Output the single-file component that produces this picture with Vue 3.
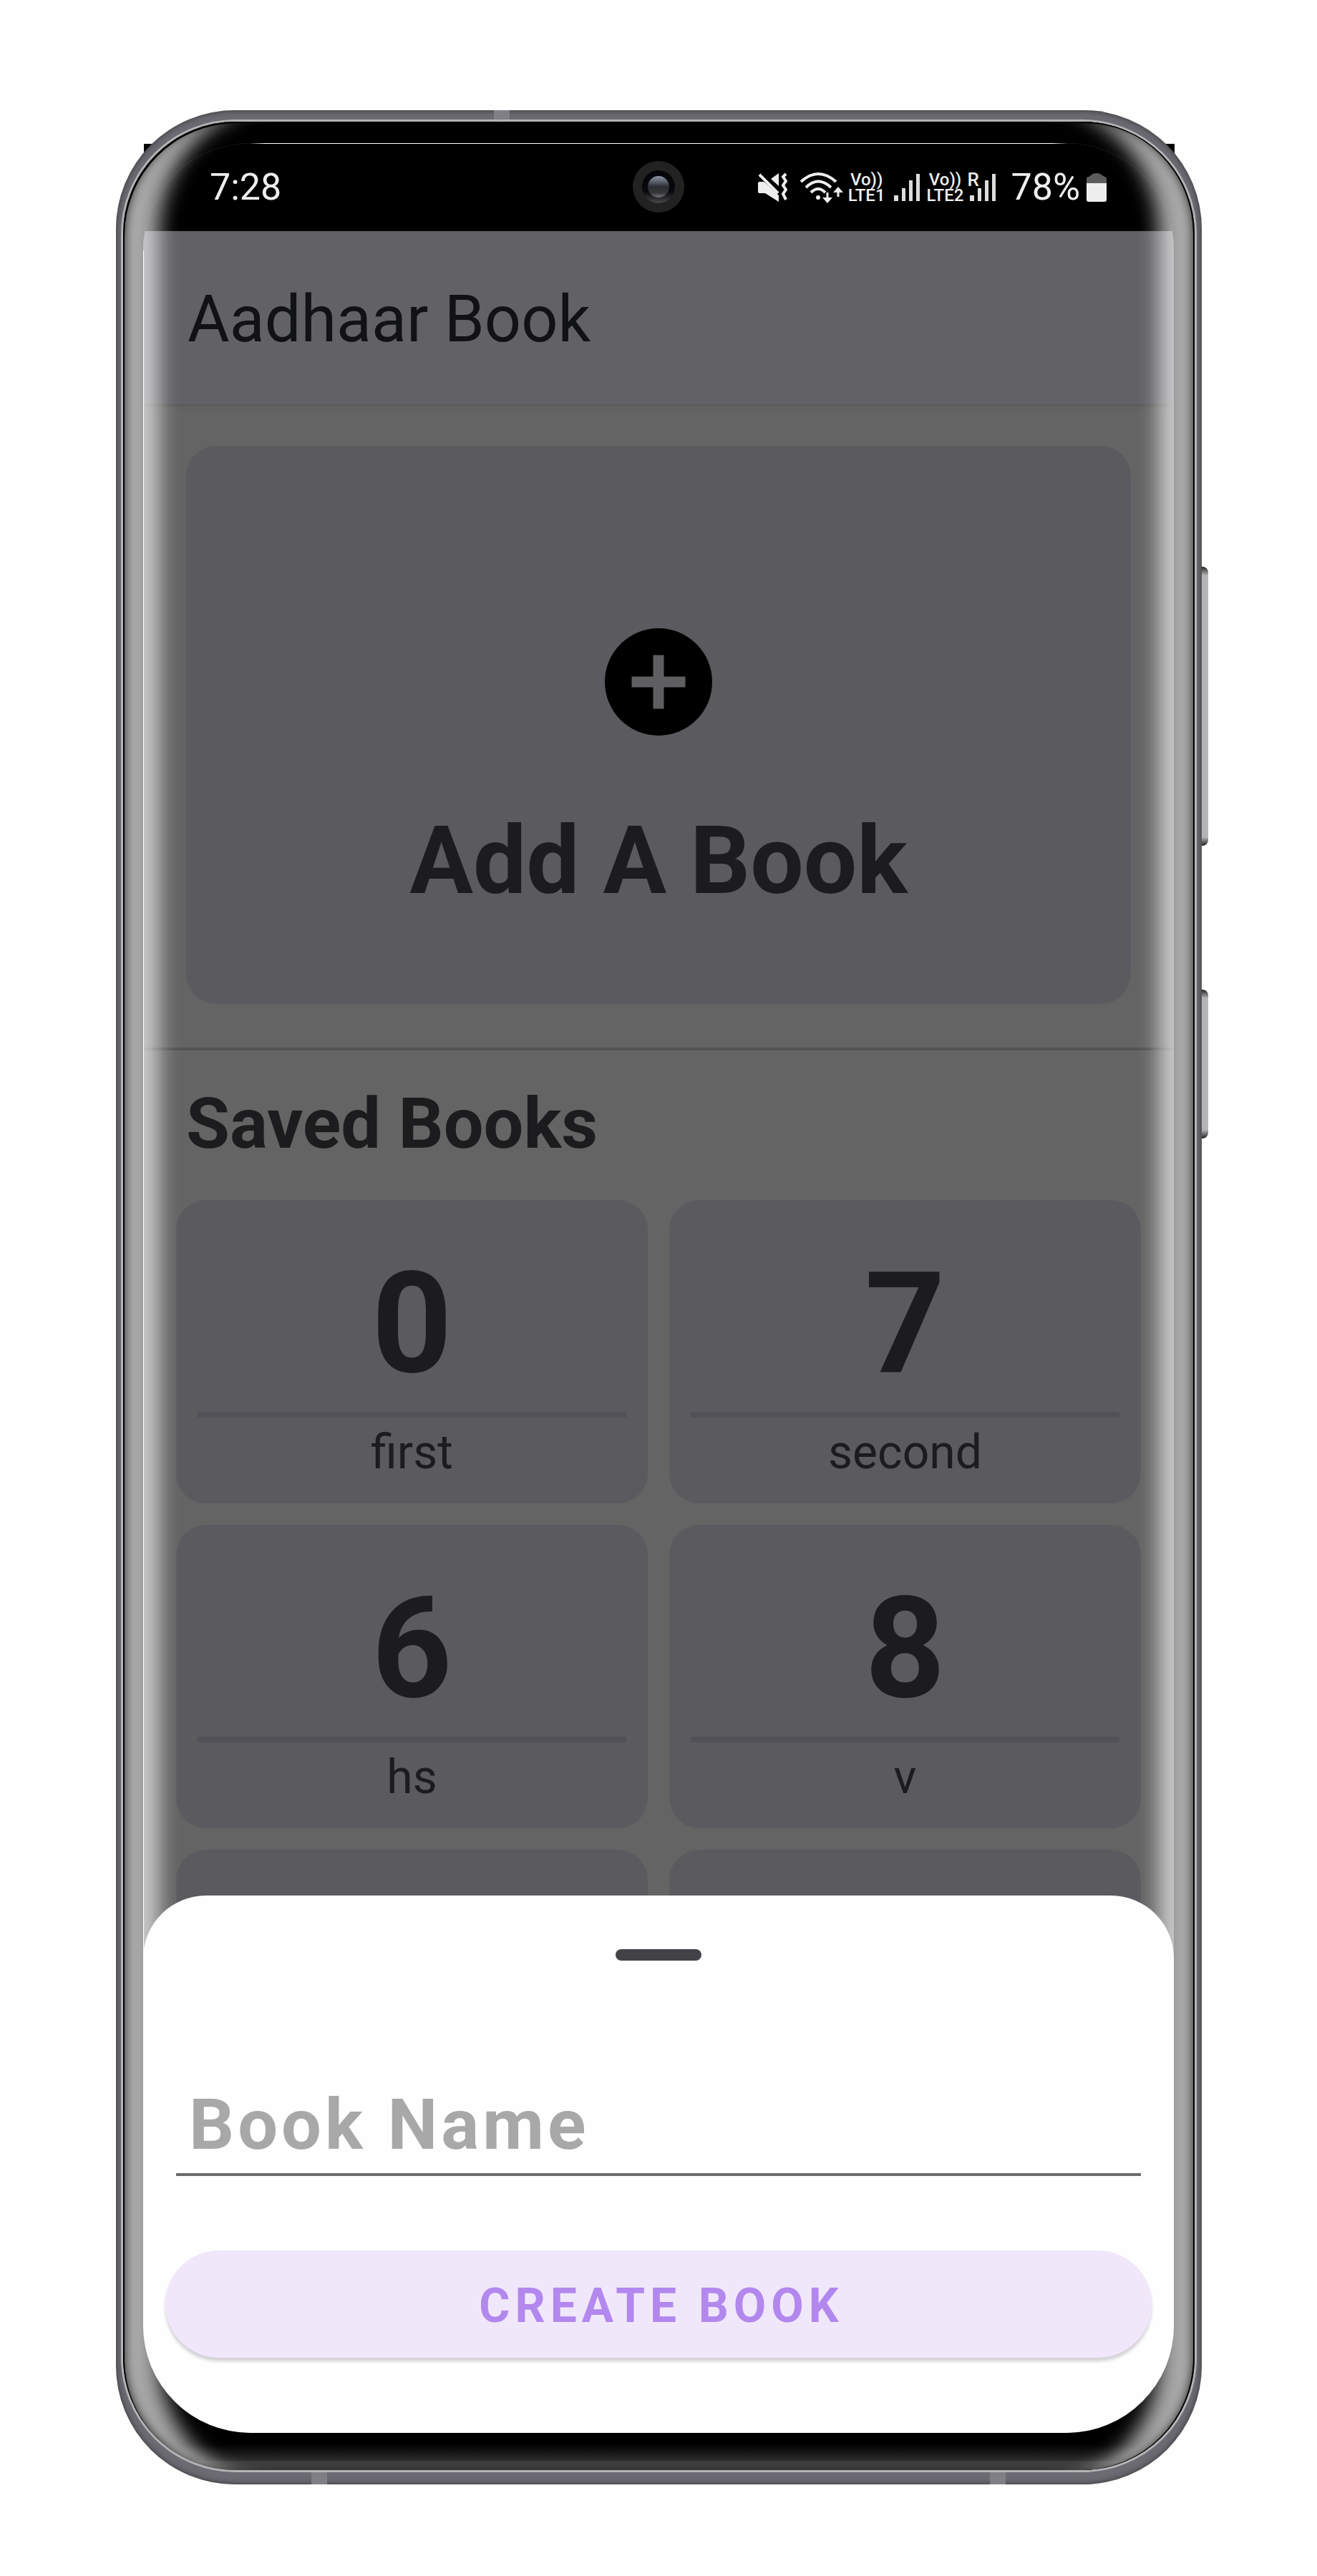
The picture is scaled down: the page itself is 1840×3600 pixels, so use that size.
<script setup>
import { ref } from 'vue'

const books = [
  { name: 'first', count: 0 },
  { name: 'second', count: 7 },
  { name: 'hs', count: 6 },
  { name: 'v', count: 8 }
]
const bookName = ref('')
</script>

<template>
  <div class="page">
    <div class="device">
      <span class="side-key volume"></span>
      <span class="side-key power"></span>
      <div class="frame">
        <span class="band band-top"></span>
        <span class="band band-bottom-left"></span>
        <span class="band band-bottom-right"></span>
        <div class="glass">
          <div class="screen">
            <div class="app">
              <div class="status-bar">
                <span class="clock">7:28</span>
                <svg class="camera" viewBox="0 0 72 72" aria-hidden="true">
                  <defs>
                    <linearGradient id="lens" x1="0" y1="0" x2="0" y2="1">
                      <stop offset="0" stop-color="#8a93a6" />
                      <stop offset="0.25" stop-color="#5d6370" />
                      <stop offset="0.5" stop-color="#2b2c31" />
                      <stop offset="0.8" stop-color="#37383b" />
                      <stop offset="1" stop-color="#77797c" />
                    </linearGradient>
                    <linearGradient id="ring" x1="0" y1="0" x2="0" y2="1">
                      <stop offset="0" stop-color="#040509" />
                      <stop offset="0.65" stop-color="#08090d" />
                      <stop offset="1" stop-color="#484848" />
                    </linearGradient>
                  </defs>
                  <circle cx="36" cy="36" r="36" fill="#222222" />
                  <circle cx="36" cy="36" r="23" fill="url(#ring)" />
                  <circle cx="36" cy="36" r="15" fill="url(#lens)" />
                </svg>
                <div class="indicators">
                  <svg class="mute" width="42" height="42" viewBox="0 0 42 42" aria-hidden="true">
                    <path d="M1 15q0-2 2-2h6l3 2 18 17v9L11 29H3q-2 0-2-2z" fill="#eee" />
                    <path d="M3 3l26 26" stroke="#eee" stroke-width="4" />
                    <path d="M30 1v18L19 9z" fill="#eee" />
                    <path d="M40 2l-4 4 4 6-4 6 4 6-4 6 4 8" fill="none" stroke="#eee" stroke-width="4" />
                  </svg>
                  <svg class="wifi" width="62" height="48" viewBox="0 0 62 48" fill="none" stroke="#eee" aria-hidden="true">
                    <path d="M2 16Q26-6 51 16M9 24Q26 7 44 24M16 31Q26 21 36 31" stroke-width="4" />
                    <circle cx="26" cy="38" r="3" fill="#eee" stroke="none" />
                    <path d="M39 31v10M54 37V28" stroke-width="3" />
                    <path d="M32 38h14l-7 8zM47 31h14l-7-8z" fill="#eee" stroke="none" />
                  </svg>
                  <span class="lte"><span>Vo))</span><span>LTE1</span></span>
                  <svg class="bars" width="37" height="40" viewBox="0 0 37 40" fill="#ddd" aria-hidden="true">
                    <path d="M0 31h6v8H0zM11 21h5v18h-5zM21 10h5v29h-5zM31 1h5v38h-5z" />
                  </svg>
                  <span class="lte"><span>Vo))</span><span>LTE2</span></span>
                  <span class="roaming">
                    <span class="roaming-mark">R</span>
                    <svg width="37" height="40" viewBox="0 0 37 40" fill="#ddd" aria-hidden="true">
                      <path d="M0 31h6v8H0zM11 21h5v18h-5zM21 10h5v29h-5zM31 1h5v38h-5z" />
                    </svg>
                  </span>
                  <span class="percent">78%</span>
                  <svg class="battery" width="30" height="42" viewBox="0 0 30 42" aria-hidden="true">
                    <path d="M1 16V9q0-3 3-3l6-4q5-2 10 0l6 4q3 0 3 3v7z" fill="#5c5c5c" />
                    <path d="M1 15h28v23q0 3-3 3H4q-3 0-3-3z" fill="#eee" />
                  </svg>
                </div>
              </div>

              <header class="app-bar"><h1>Aadhaar Book</h1></header>

              <main>
                <button type="button" class="add-card">
                  <svg width="180" height="180" viewBox="0 0 24 24" aria-hidden="true">
                    <circle cx="12" cy="12" r="10" fill="#000" />
                    <path d="M11 7h2v4h4v2h-4v4h-2v-4H7v-2h4z" fill="#5f5f61" />
                  </svg>
                  <span>Add A Book</span>
                </button>
                <hr class="divider" />
                <h2>Saved Books</h2>
                <div class="book-grid">
                  <article v-for="book in books" :key="book.name" class="book">
                    <strong>{{ book.count }}</strong>
                    <hr />
                    <span>{{ book.name }}</span>
                  </article>
                  <article class="book"></article>
                  <article class="book"></article>
                </div>
              </main>
            </div>

            <form class="sheet" @submit.prevent>
              <span class="handle"></span>
              <input v-model="bookName" type="text" placeholder="Book Name" aria-label="Book Name" />
              <button type="submit">CREATE BOOK</button>
            </form>
          </div>
          <span class="glare"></span>
        </div>
      </div>
    </div>
  </div>
</template>

<style>
body {
  margin: 0;
  background: #fefefe;
}
</style>

<style scoped>
* {
  box-sizing: border-box;
}

.page {
  padding: 154px 161px 128px 162px;
  font-family: Roboto, "Liberation Sans", sans-serif;
  color: #1c1b1f;
}

.device {
  position: relative;
  z-index: 0;
}

/* square display panel peeking out behind the rounded shell */
.device::before {
  content: "";
  position: absolute;
  z-index: -1;
  top: 47px;
  left: 39px;
  right: 38px;
  height: 80px;
  background: #000;
}

.side-key {
  position: absolute;
  right: -9px;
  width: 12px;
  border-radius: 0 8px 8px 0;
  background: linear-gradient(#222, #b4b4b6 12px, #b4b4b6 calc(100% - 12px), #222);
}

.volume {
  top: 638px;
  height: 390px;
}

.power {
  top: 1229px;
  height: 208px;
}

.frame {
  position: relative;
  padding: 13px 7px 17px;
  border-radius: 166px;
  background: #6c6b73;
  box-shadow: inset 0 0 8px #333;
}

.band {
  position: absolute;
  width: 22px;
  background: #807f86;
}

.band-top {
  top: 0;
  left: 528px;
  height: 14px;
}

.band-bottom-left {
  bottom: 0;
  left: 273px;
  height: 18px;
}

.band-bottom-right {
  bottom: 0;
  right: 274px;
  height: 18px;
}

.glass {
  position: relative;
  padding: 30px 29px 52px 28px;
  border: 3px solid #b4b4b6;
  border-radius: 160px;
  background: linear-gradient(to top, #464647, #3c3c3d 12px, #2a2a2a 14px, #000 36px);
}

.glare {
  position: absolute;
  inset: 0;
  border-radius: 157px;
  pointer-events: none;
  box-shadow:
    inset 2px 2px 0 #000,
    inset -2px 0 0 #000,
    inset 8px 0 16px -8px #000,
    inset -8px 0 16px -8px #000,
    inset 80px 0 28px -30px rgba(255, 255, 255, 0.66),
    inset -80px 0 28px -30px rgba(255, 255, 255, 0.66);
}

.screen {
  position: relative;
  display: grid;
  overflow: hidden;
  border-radius: 150px;
}

.screen::before {
  content: "";
  position: absolute;
  z-index: 2;
  top: 0;
  left: 146px;
  right: 146px;
  height: 1px;
  background: linear-gradient(to right, #000, #fff 24px, #fff calc(100% - 24px), #000);
}

.screen::after {
  content: "";
  position: absolute;
  top: 150px;
  left: 0;
  bottom: 150px;
  width: 1px;
  background: #fff;
}

.app,
.sheet {
  grid-area: 1 / 1;
}

.app {
  background: #646464;
}

.status-bar {
  display: flex;
  align-items: center;
  justify-content: space-between;
  height: 123px;
  padding: 0 93px;
  background: #000;
  color: #eee;
  font-size: 52px;
  line-height: 60px;
}

.camera {
  position: absolute;
  top: 25px;
  left: 50%;
  width: 72px;
  height: 72px;
  margin-left: -36px;
}

.indicators {
  display: flex;
  align-items: center;
}

.wifi {
  margin: 0 6px 0 17px;
}

.lte {
  display: flex;
  flex-direction: column;
  align-items: center;
  font-size: 24px;
  font-weight: 500;
  line-height: 22px;
}

.bars {
  margin: 0 9px 0 12px;
}

.roaming {
  position: relative;
  display: flex;
  margin: 0 20px 0 9px;
}

.roaming-mark {
  position: absolute;
  top: -2px;
  left: -4px;
  background: #000;
  font-size: 26px;
  font-weight: 500;
  line-height: 22px;
}

.battery {
  margin-left: 8px;
}

.app-bar {
  display: flex;
  align-items: center;
  height: 242px;
  padding: 6px 62px 0;
  background: #626166;
  box-shadow: 0 2px 4px rgba(80, 80, 76, 0.7);
}

h1,
h2 {
  margin: 0;
}

h1 {
  color: #111213;
  font-size: 90px;
  font-weight: 400;
  line-height: 106px;
}

main {
  padding: 58px 0 391px;
}

.add-card {
  display: flex;
  flex-direction: column;
  align-items: center;
  gap: 80px;
  width: calc(100% - 120px);
  margin: 0 60px;
  padding: 240px 0 120px;
  border: 0;
  border-radius: 42px;
  background: #5b5a5e;
  color: #1c1b1f;
  font: 700 132px/160px Roboto, "Liberation Sans", sans-serif;
}

.divider {
  height: 4px;
  margin: 61px 0 42px;
  border: 0;
  background: #545454;
}

h2 {
  margin: 0 60px 47px;
  color: #1c1c1e;
  font-size: 99px;
  font-weight: 700;
  line-height: 120px;
}

.book-grid {
  display: grid;
  grid-template-columns: 1fr 1fr;
  gap: 30px;
  padding: 0 46px;
}

.book {
  display: flex;
  flex-direction: column;
  align-items: center;
  min-height: 424px;
  padding: 58px 30px 33px;
  border-radius: 42px;
  background: #5b5a5e;
}

.book strong {
  font-size: 196px;
  line-height: 230px;
}

.book hr {
  width: 100%;
  height: 8px;
  margin: 8px 0 11px;
  border: 0;
  background: #525157;
}

.book span {
  font-size: 66px;
  line-height: 76px;
}

.sheet {
  position: relative;
  z-index: 1;
  display: flex;
  flex-direction: column;
  align-self: end;
  padding: 75px 31px 105px;
  border-radius: 88px 88px 0 0;
  background: #fefefe;
}

.handle {
  align-self: center;
  width: 120px;
  height: 16px;
  border-radius: 8px;
  background: #434247;
}

.sheet input {
  height: 130px;
  margin: 171px 15px 104px;
  padding: 0 18px 10px;
  border: 0;
  border-bottom: 4px solid #6b6b6b;
  outline: 0;
  background: transparent;
  color: #1c1b1f;
  font: 700 99px/116px Roboto, "Liberation Sans", sans-serif;
  letter-spacing: 5px;
}

.sheet input::placeholder {
  color: #a8a8a8;
  opacity: 1;
}

.sheet button {
  height: 150px;
  padding: 6px 0 0 8px;
  border: 0;
  border-radius: 75px;
  background: #f1e7fb;
  box-shadow: 0 5px 4px rgba(60, 50, 70, 0.22);
  color: #b288ee;
  font: 700 66px/78px Roboto, "Liberation Sans", sans-serif;
  letter-spacing: 7px;
}
</style>
